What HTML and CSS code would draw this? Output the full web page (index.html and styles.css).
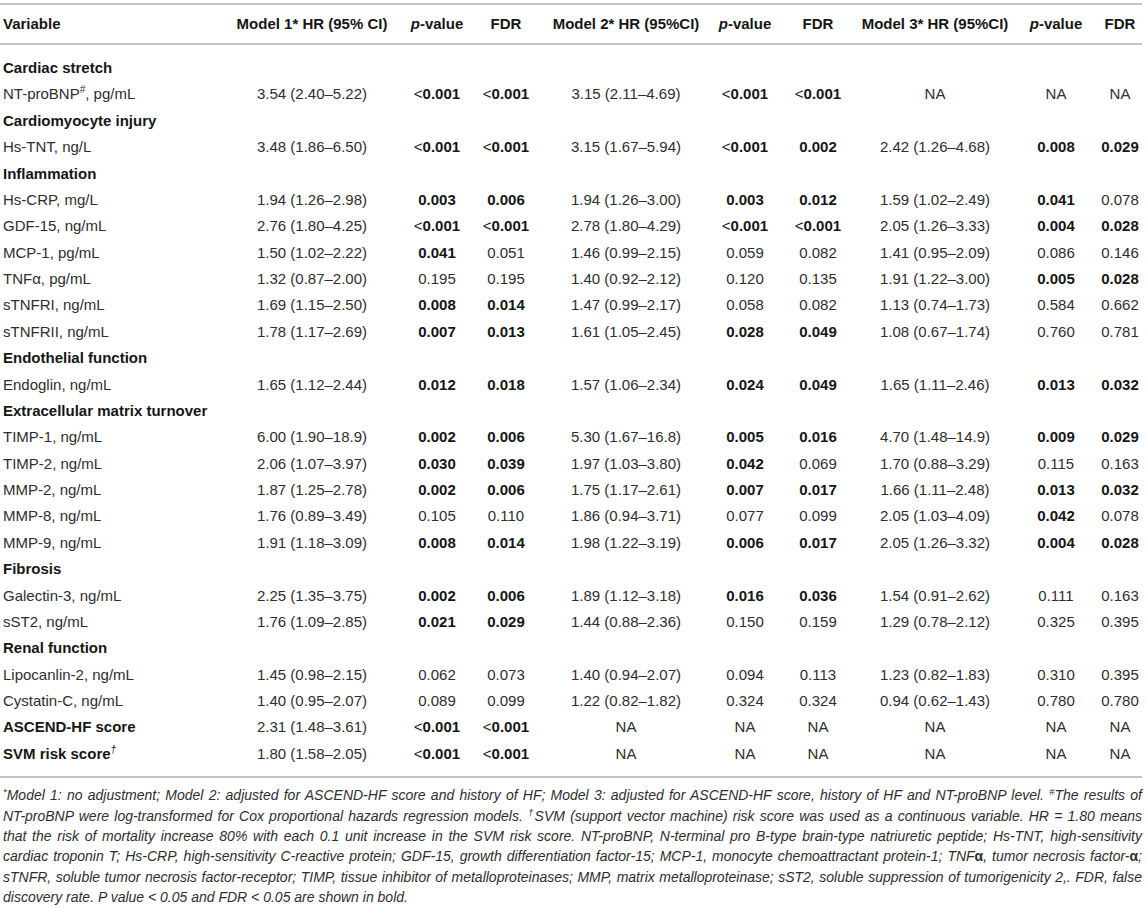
FILE: index.html
```html
<!DOCTYPE html>
<html lang="en">
<head>
<meta charset="utf-8">
<title>Cox regression results</title>
<link rel="stylesheet" href="styles.css">
</head>
<body>
<table class="results">
  <colgroup>
    <col class="w-var"><col class="w-m1"><col class="w-p1"><col class="w-f1">
    <col class="w-m2"><col class="w-p2"><col class="w-f2">
    <col class="w-m3"><col class="w-p3"><col class="w-f3">
  </colgroup>
  <thead>
    <tr>
      <th class="var">Variable</th>
      <th>Model 1* HR (95% CI)</th>
      <th><i>p</i>-value</th>
      <th>FDR</th>
      <th>Model 2* HR (95%CI)</th>
      <th><i>p</i>-value</th>
      <th>FDR</th>
      <th>Model 3* HR (95%CI)</th>
      <th><i>p</i>-value</th>
      <th>FDR</th>
    </tr>
  </thead>
  <tbody>
    <tr class="sec first"><td class="var" colspan="10">Cardiac stretch</td></tr>
    <tr><td class="var">NT-proBNP<sup>#</sup>, pg/mL</td><td>3.54 (2.40–5.22)</td><td class="b"><span class="lt">&lt;</span>0.001</td><td class="b"><span class="lt">&lt;</span>0.001</td><td>3.15 (2.11–4.69)</td><td class="b"><span class="lt">&lt;</span>0.001</td><td class="b"><span class="lt">&lt;</span>0.001</td><td>NA</td><td>NA</td><td>NA</td></tr>
    <tr class="sec"><td class="var" colspan="10">Cardiomyocyte injury</td></tr>
    <tr><td class="var">Hs-TNT, ng/L</td><td>3.48 (1.86–6.50)</td><td class="b"><span class="lt">&lt;</span>0.001</td><td class="b"><span class="lt">&lt;</span>0.001</td><td>3.15 (1.67–5.94)</td><td class="b"><span class="lt">&lt;</span>0.001</td><td class="b">0.002</td><td>2.42 (1.26–4.68)</td><td class="b">0.008</td><td class="b">0.029</td></tr>
    <tr class="sec"><td class="var" colspan="10">Inflammation</td></tr>
    <tr><td class="var">Hs-CRP, mg/L</td><td>1.94 (1.26–2.98)</td><td class="b">0.003</td><td class="b">0.006</td><td>1.94 (1.26–3.00)</td><td class="b">0.003</td><td class="b">0.012</td><td>1.59 (1.02–2.49)</td><td class="b">0.041</td><td>0.078</td></tr>
    <tr><td class="var">GDF-15, ng/mL</td><td>2.76 (1.80–4.25)</td><td class="b"><span class="lt">&lt;</span>0.001</td><td class="b"><span class="lt">&lt;</span>0.001</td><td>2.78 (1.80–4.29)</td><td class="b"><span class="lt">&lt;</span>0.001</td><td class="b"><span class="lt">&lt;</span>0.001</td><td>2.05 (1.26–3.33)</td><td class="b">0.004</td><td class="b">0.028</td></tr>
    <tr><td class="var">MCP-1, pg/mL</td><td>1.50 (1.02–2.22)</td><td class="b">0.041</td><td>0.051</td><td>1.46 (0.99–2.15)</td><td>0.059</td><td>0.082</td><td>1.41 (0.95–2.09)</td><td>0.086</td><td>0.146</td></tr>
    <tr><td class="var">TNFα, pg/mL</td><td>1.32 (0.87–2.00)</td><td>0.195</td><td>0.195</td><td>1.40 (0.92–2.12)</td><td>0.120</td><td>0.135</td><td>1.91 (1.22–3.00)</td><td class="b">0.005</td><td class="b">0.028</td></tr>
    <tr><td class="var">sTNFRI, ng/mL</td><td>1.69 (1.15–2.50)</td><td class="b">0.008</td><td class="b">0.014</td><td>1.47 (0.99–2.17)</td><td>0.058</td><td>0.082</td><td>1.13 (0.74–1.73)</td><td>0.584</td><td>0.662</td></tr>
    <tr><td class="var">sTNFRII, ng/mL</td><td>1.78 (1.17–2.69)</td><td class="b">0.007</td><td class="b">0.013</td><td>1.61 (1.05–2.45)</td><td class="b">0.028</td><td class="b">0.049</td><td>1.08 (0.67–1.74)</td><td>0.760</td><td>0.781</td></tr>
    <tr class="sec"><td class="var" colspan="10">Endothelial function</td></tr>
    <tr><td class="var">Endoglin, ng/mL</td><td>1.65 (1.12–2.44)</td><td class="b">0.012</td><td class="b">0.018</td><td>1.57 (1.06–2.34)</td><td class="b">0.024</td><td class="b">0.049</td><td>1.65 (1.11–2.46)</td><td class="b">0.013</td><td class="b">0.032</td></tr>
    <tr class="sec"><td class="var" colspan="10">Extracellular matrix turnover</td></tr>
    <tr><td class="var">TIMP-1, ng/mL</td><td>6.00 (1.90–18.9)</td><td class="b">0.002</td><td class="b">0.006</td><td>5.30 (1.67–16.8)</td><td class="b">0.005</td><td class="b">0.016</td><td>4.70 (1.48–14.9)</td><td class="b">0.009</td><td class="b">0.029</td></tr>
    <tr><td class="var">TIMP-2, ng/mL</td><td>2.06 (1.07–3.97)</td><td class="b">0.030</td><td class="b">0.039</td><td>1.97 (1.03–3.80)</td><td class="b">0.042</td><td>0.069</td><td>1.70 (0.88–3.29)</td><td>0.115</td><td>0.163</td></tr>
    <tr><td class="var">MMP-2, ng/mL</td><td>1.87 (1.25–2.78)</td><td class="b">0.002</td><td class="b">0.006</td><td>1.75 (1.17–2.61)</td><td class="b">0.007</td><td class="b">0.017</td><td>1.66 (1.11–2.48)</td><td class="b">0.013</td><td class="b">0.032</td></tr>
    <tr><td class="var">MMP-8, ng/mL</td><td>1.76 (0.89–3.49)</td><td>0.105</td><td>0.110</td><td>1.86 (0.94–3.71)</td><td>0.077</td><td>0.099</td><td>2.05 (1.03–4.09)</td><td class="b">0.042</td><td>0.078</td></tr>
    <tr><td class="var">MMP-9, ng/mL</td><td>1.91 (1.18–3.09)</td><td class="b">0.008</td><td class="b">0.014</td><td>1.98 (1.22–3.19)</td><td class="b">0.006</td><td class="b">0.017</td><td>2.05 (1.26–3.32)</td><td class="b">0.004</td><td class="b">0.028</td></tr>
    <tr class="sec"><td class="var" colspan="10">Fibrosis</td></tr>
    <tr><td class="var">Galectin-3, ng/mL</td><td>2.25 (1.35–3.75)</td><td class="b">0.002</td><td class="b">0.006</td><td>1.89 (1.12–3.18)</td><td class="b">0.016</td><td class="b">0.036</td><td>1.54 (0.91–2.62)</td><td>0.111</td><td>0.163</td></tr>
    <tr><td class="var">sST2, ng/mL</td><td>1.76 (1.09–2.85)</td><td class="b">0.021</td><td class="b">0.029</td><td>1.44 (0.88–2.36)</td><td>0.150</td><td>0.159</td><td>1.29 (0.78–2.12)</td><td>0.325</td><td>0.395</td></tr>
    <tr class="sec"><td class="var" colspan="10">Renal function</td></tr>
    <tr><td class="var">Lipocanlin-2, ng/mL</td><td>1.45 (0.98–2.15)</td><td>0.062</td><td>0.073</td><td>1.40 (0.94–2.07)</td><td>0.094</td><td>0.113</td><td>1.23 (0.82–1.83)</td><td>0.310</td><td>0.395</td></tr>
    <tr><td class="var">Cystatin-C, ng/mL</td><td>1.40 (0.95–2.07)</td><td>0.089</td><td>0.099</td><td>1.22 (0.82–1.82)</td><td>0.324</td><td>0.324</td><td>0.94 (0.62–1.43)</td><td>0.780</td><td>0.780</td></tr>
    <tr><td class="var b">ASCEND-HF score</td><td>2.31 (1.48–3.61)</td><td class="b"><span class="lt">&lt;</span>0.001</td><td class="b"><span class="lt">&lt;</span>0.001</td><td>NA</td><td>NA</td><td>NA</td><td>NA</td><td>NA</td><td>NA</td></tr>
    <tr class="last"><td class="var b">SVM risk score<sup class="dag">†</sup></td><td>1.80 (1.58–2.05)</td><td class="b"><span class="lt">&lt;</span>0.001</td><td class="b"><span class="lt">&lt;</span>0.001</td><td>NA</td><td>NA</td><td>NA</td><td>NA</td><td>NA</td><td>NA</td></tr>
  </tbody>
</table>
<p class="note">
  <span class="ln"><sup>*</sup>Model 1: no adjustment; Model 2: adjusted for ASCEND-HF score and history of HF; Model 3: adjusted for ASCEND-HF score, history of HF and NT-proBNP level. <sup>#</sup>The results of</span>
  <span class="ln">NT-proBNP were log-transformed for Cox proportional hazards regression models. <sup>†</sup>SVM (support vector machine) risk score was used as a continuous variable. HR = 1.80 means</span>
  <span class="ln">that the risk of mortality increase 80% with each 0.1 unit increase in the SVM risk score. NT-proBNP, N-terminal pro B-type brain-type natriuretic peptide; Hs-TNT, high-sensitivity</span>
  <span class="ln">cardiac troponin T; Hs-CRP, high-sensitivity C-reactive protein; GDF-15, growth differentiation factor-15; MCP-1, monocyte chemoattractant protein-1; TNF<span class="greek">α</span>, tumor necrosis factor-<span class="greek">α</span>;</span>
  <span class="ln">sTNFR, soluble tumor necrosis factor-receptor; TIMP, tissue inhibitor of metalloproteinases; MMP, matrix metalloproteinase; sST2, soluble suppression of tumorigenicity 2,. FDR, false</span>
  <span class="ln end">discovery rate. P value &lt; 0.05 and FDR &lt; 0.05 are shown in bold.</span>
</p>
</body>
</html>
```

FILE: styles.css
```css
html, body {
  background: #ffffff;
}

body {
  margin: 0;
  padding: 3px 0 0;
  font-family: "Liberation Sans", Arial, Helvetica, sans-serif;
  color: #2e2e2e;
}

.results {
  width: 1142px;
  table-layout: fixed;
  border-collapse: separate;
  border-spacing: 0;
  font-size: 15px;
}

.w-var { width: 220px; }
.w-m1  { width: 184px; }
.w-p1  { width: 66px; }
.w-f1  { width: 72px; }
.w-m2  { width: 168px; }
.w-p2  { width: 70px; }
.w-f2  { width: 76px; }
.w-m3  { width: 158px; }
.w-p3  { width: 84px; }
.w-f3  { width: 44px; }

.results th {
  padding: 10px 0;
  line-height: 18px;
  font-weight: 700;
  color: #161616;
  text-align: center;
  vertical-align: middle;
  white-space: nowrap;
  border-top: 2px solid #c4c4c4;
  border-bottom: 2px solid #c4c4c4;
}

.results th.var {
  text-align: left;
  padding-left: 3px;
}

.results td {
  padding: 0;
  line-height: 26.38px;
  text-align: center;
  vertical-align: middle;
  white-space: nowrap;
}

.results td.var {
  text-align: left;
  padding-left: 3px;
}

.results tr.first td {
  padding-top: 10px;
}

.results tr.last td {
  padding-bottom: 9px;
  border-bottom: 2px solid #c4c4c4;
}

.results .sec td {
  font-weight: 700;
  color: #161616;
}

.results .b {
  font-weight: 700;
  color: #161616;
}

.lt {
  font-weight: 400;
}

sup {
  font-size: 10px;
  line-height: 0;
  vertical-align: 6px;
}

sup.dag {
  font-style: italic;
  font-weight: 400;
}

.note {
  margin: 7px 0 0 3px;
  width: 1139px;
  font-style: italic;
  font-size: 14px;
  line-height: 20.4px;
  color: #2e2e2e;
}

.note .ln {
  display: block;
  text-align: justify;
  text-align-last: justify;
}

.note .ln.end {
  text-align-last: left;
}

.note sup {
  font-size: 9.5px;
  vertical-align: 5px;
}

.greek {
  font-weight: 700;
  font-style: normal;
}
```
